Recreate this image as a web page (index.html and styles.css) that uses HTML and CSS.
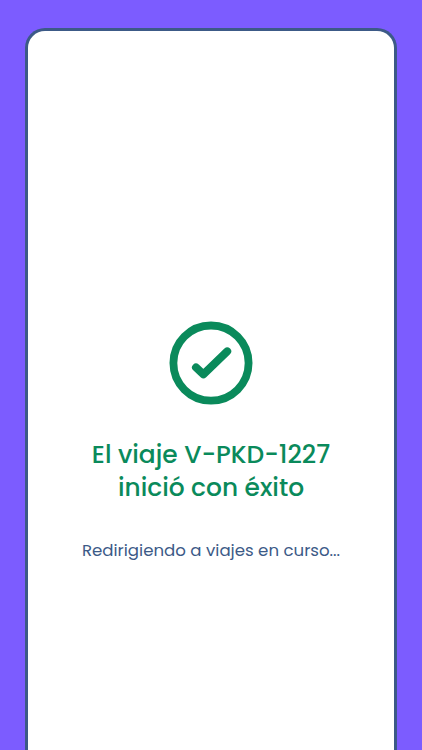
FILE: index.html
```
<!DOCTYPE html>
<html lang="es">

<head>
	<meta charset="UTF-8">
	<meta name="viewport" content="width=device-width, initial-scale=1.0">
	<link rel="stylesheet" href="styles.css">
	<title>Viaje iniciado</title>
</head>

<body>
	<main class="screen">
		<svg class="check-icon" viewBox="0 0 84 84" fill="none" stroke="currentColor" stroke-linecap="round" stroke-linejoin="round">
			<circle cx="42" cy="42.1" r="37.6" stroke-width="7.8" />
			<path d="M27 46.4L34.4 53.4L58.2 30.4" stroke-width="8" />
		</svg>
		<h1 class="title">
			<span class="title-line">El viaje V-PKD-1227</span>
			<span class="title-line">inició con éxito</span>
		</h1>
		<p class="message">Redirigiendo a viajes en curso...</p>
	</main>
</body>

</html>
```

FILE: styles.css
```
* {
	box-sizing: border-box;
}

body {
	margin: 0;
	height: 100vh;
	padding: 28px 25px 0;
	overflow: hidden;
	background: #7c5cff;
	font-family: Poppins, Inter, "Open Sans", sans-serif;
}

.screen {
	height: 100%;
	display: flex;
	flex-direction: column;
	align-items: center;
	padding-top: 290px;
	border: 3px solid #3c5a87;
	border-bottom: 0;
	border-radius: 20px 20px 0 0;
	background: #fff;
	text-align: center;
}

.check-icon {
	width: 84px;
	height: 84px;
	flex-shrink: 0;
	color: #0a8a5b;
}

.title {
	margin: 33px 0 0;
	color: #0a8a5b;
	font-size: 24.9px;
	font-weight: 500;
	line-height: 33px;
}

.title-line {
	display: block;
	white-space: nowrap;
}

.message {
	margin: 34px 0 0;
	color: #3c5a87;
	font-size: 16.6px;
	line-height: 26px;
	white-space: nowrap;
}
```
